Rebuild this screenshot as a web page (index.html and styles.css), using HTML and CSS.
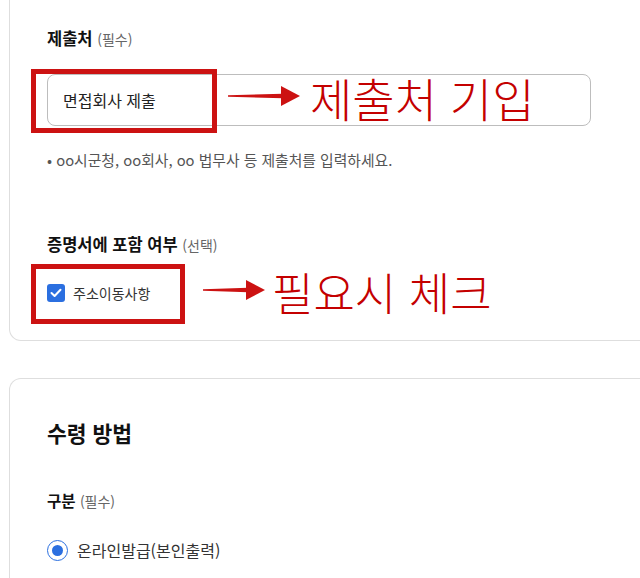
FILE: index.html
```html
<!DOCTYPE html>
<html lang="ko">
<head>
  <meta charset="UTF-8">
  <title>증명서 신청</title>
  <link rel="stylesheet" href="styles.css">
</head>
<body>

  <div class="page">
    <!-- 제출처 / 포함 여부 -->
    <section class="card card-top">
      <div class="label"><b>제출처</b> <span class="opt">(필수)</span></div>
      <div class="field">
        <input type="text" class="text-input" value="면접회사 제출">
        <div class="note-box note-box-input"></div>
        <svg class="note-arrow arrow-1" width="72" height="22" viewBox="0 0 72 22">
          <polygon points="0,10.3 55,8.8 55,13.2 0,11.7" />
          <polygon points="53,1 72,11 53,21" />
        </svg>
        <span class="note-text note-text-1">제출처 기입</span>
      </div>
      <p class="hint">• oo시군청, oo회사, oo 법무사 등 제출처를 입력하세요.</p>

      <div class="label label-gap"><b>증명서에 포함 여부</b> <span class="opt">(선택)</span></div>
      <div class="field check-row">
        <span class="checkbox">
          <svg width="12" height="10" viewBox="0 0 12 10"><polyline points="1.5,5 4.6,8 10.5,1.8" /></svg>
        </span>
        <span class="check-label">주소이동사항</span>
        <div class="note-box note-box-check"></div>
        <svg class="note-arrow arrow-2" width="62" height="22" viewBox="0 0 62 22">
          <polygon points="0,10.3 45,8.8 45,13.2 0,11.7" />
          <polygon points="43,1 62,11 43,21" />
        </svg>
        <span class="note-text note-text-2">필요시 체크</span>
      </div>
    </section>

    <!-- 수령 방법 -->
    <section class="card card-bottom">
      <h3 class="section-title">수령 방법</h3>
      <div class="label label-small label-gap2"><b>구분</b> <span class="opt">(필수)</span></div>
      <div class="radio-row">
        <span class="radio"><span class="dot"></span></span>
        <span class="radio-label">온라인발급(본인출력)</span>
      </div>
    </section>
  </div>

</body>
</html>
```

FILE: styles.css
```css
html, body {
  margin: 0;
  background: #fff;
  overflow: hidden;
}

body {
  font-family: "Noto Sans CJK KR", "Noto Sans", sans-serif;
  color: #222;
  width: 640px;
  height: 578px;
}

.page {
  padding-left: 9px;
}

.card {
  border: 1px solid #dedede;
  background: #fff;
  width: 700px;
  box-sizing: border-box;
  padding-left: 37px;
}

.card-top {
  border-top: none;
  border-radius: 0 0 12px 12px;
  padding-top: 27px;
  padding-bottom: 36px;
}

.card-bottom {
  margin-top: 37px;
  border-bottom: none;
  border-radius: 12px 0 0 0;
  padding-top: 40px;
  height: 200px;
}

.label {
  font-size: 16.5px;
  line-height: 22px;
  color: #111;
}

.label b {
  font-weight: 700;
}

.label-small {
  font-size: 15.5px;
}

.opt {
  font-size: 14px;
  color: #666;
}

.label-gap {
  margin-top: 63px;
}

.label-gap2 {
  margin-top: 42px;
}

.field {
  position: relative;
}

.text-input {
  display: block;
  margin-top: 24px;
  width: 544px;
  height: 52px;
  box-sizing: border-box;
  border: 1px solid #bdbdbd;
  border-radius: 8px;
  padding: 0 15px;
  font-family: inherit;
  font-size: 16px;
  color: #222;
  background: #fff;
}

.hint {
  margin: 24px 0 0;
  font-size: 14.8px;
  line-height: 20px;
  color: #555;
}

.check-row {
  margin-top: 26px;
  display: flex;
  align-items: center;
  height: 22px;
}

.checkbox {
  width: 18px;
  height: 18px;
  border-radius: 3px;
  background: #2b6fe0;
  display: flex;
  align-items: center;
  justify-content: center;
}

.checkbox polyline {
  fill: none;
  stroke: #fff;
  stroke-width: 2;
  stroke-linecap: round;
  stroke-linejoin: round;
}

.check-label {
  margin-left: 8px;
  font-size: 14px;
  color: #333;
}

.section-title {
  margin: 0;
  font-size: 21.5px;
  line-height: 28px;
  font-weight: 700;
  color: #111;
}

.radio-row {
  margin-top: 26px;
  display: flex;
  align-items: center;
  height: 24px;
}

.radio {
  width: 21px;
  height: 21px;
  box-sizing: border-box;
  border: 1.5px solid #2b6fe0;
  border-radius: 50%;
  display: flex;
  align-items: center;
  justify-content: center;
}

.dot {
  width: 11px;
  height: 11px;
  border-radius: 50%;
  background: #2b6fe0;
}

.radio-label {
  margin-left: 9px;
  font-size: 16px;
  color: #333;
}

/* annotations drawn over the form */
.note-box {
  position: absolute;
  border: 5px solid #cc1212;
  box-sizing: border-box;
  pointer-events: none;
}

.note-box-input {
  left: -16px;
  top: -5px;
  width: 186px;
  height: 64px;
}

.note-box-check {
  left: -16px;
  top: -18px;
  width: 154px;
  height: 60px;
}

.note-arrow {
  position: absolute;
  fill: #cc1212;
}

.arrow-1 {
  left: 181px;
  top: 11px;
}

.arrow-2 {
  left: 156px;
  top: -3px;
}

.note-text {
  position: absolute;
  font-size: 46px;
  font-weight: 300;
  line-height: 50px;
  color: #c40000;
  white-space: nowrap;
}

.note-text-1 {
  left: 263px;
  top: -2px;
}

.note-text-2 {
  left: 225px;
  top: -15px;
  font-size: 45px;
}
```
